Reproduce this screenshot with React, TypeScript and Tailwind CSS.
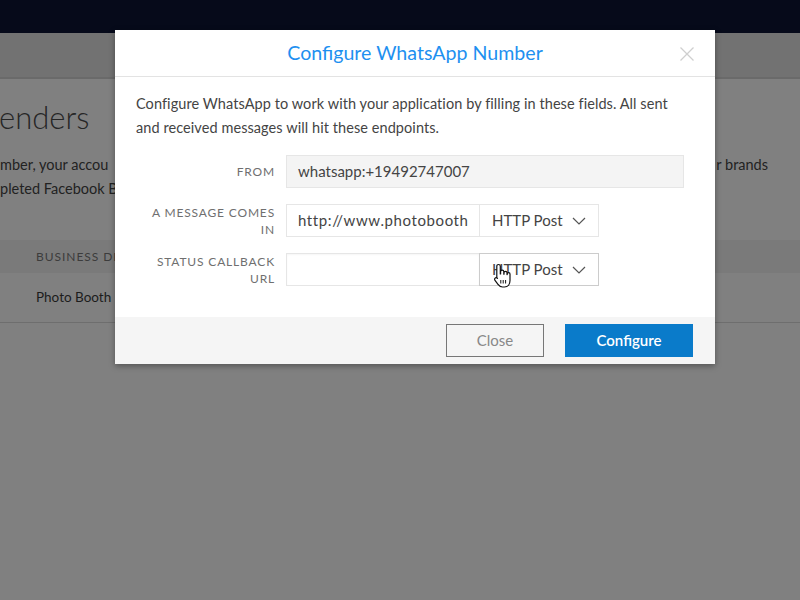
import React from "react";

function Chevron() {
  return (
    <svg width="14" height="8" viewBox="0 0 14 8" className="shrink-0">
      <path d="M1 1 L7 7 L13 1" fill="none" stroke="#555" strokeWidth="1.2" />
    </svg>
  );
}

function HandCursor() {
  return (
    <svg width="20" height="26" viewBox="0 0 20 26" className="absolute left-[13px] top-[9px] pointer-events-none">
      <path
        d="M5.5 1.5 C6.6 1.5 7.3 2.2 7.3 3.3 L7.3 11 L7.6 11 L7.6 8.8 C7.6 7.8 8.3 7.2 9.2 7.2 C10.1 7.2 10.8 7.8 10.8 8.8 L10.8 11.2 L11 11.2 L11 9.8 C11 8.9 11.7 8.3 12.5 8.3 C13.3 8.3 14 8.9 14 9.8 L14 11.6 L14.2 11.6 L14.2 11 C14.2 10.2 14.9 9.6 15.6 9.6 C16.4 9.6 17 10.2 17 11 L17 17.5 C17 21 15 24 11.5 24 L9.5 24 C7.5 24 6.2 23 5 21.4 L2 17.3 C1.4 16.5 1.5 15.5 2.2 15 C2.9 14.4 3.9 14.6 4.5 15.3 L3.8 14.6 L3.8 3.3 C3.8 2.2 4.5 1.5 5.5 1.5 Z"
        fill="#fff"
        stroke="#111"
        strokeWidth="1.2"
        strokeLinejoin="round"
      />
      <path d="M10.2 17 L10.2 20.5 M12.6 17 L12.6 20.5 M7.8 17 L7.8 20.5" stroke="#111" strokeWidth="1" />
    </svg>
  );
}

export default function App() {
  const font = { fontFamily: "Lato, 'Open Sans', 'Liberation Sans', sans-serif" };
  return (
    <div className="relative w-[800px] h-[600px] overflow-hidden bg-[#808080]" style={font}>
      {/* background page (dimmed) */}
      <div className="h-[33px] bg-[#060a1a]" />
      <div className="h-[46px] bg-[#727272] border-b-2 border-[#6a6a6a]" />
      <div className="pt-[20px]">
        <div className="whitespace-nowrap text-[31px] leading-[36px] font-light text-[#262626] -ml-[1px]">enders</div>
        <div className="mt-[18px] flex justify-between text-[14.5px] leading-[24px] text-[#222]">
          <span className="whitespace-nowrap">mber, your accou</span>
          <span className="pr-[32px]">r brands</span>
        </div>
        <div className="flex text-[14.5px] leading-[24px] text-[#222]">
          <span className="whitespace-nowrap">pleted Facebook B</span>
        </div>
        <div className="mt-[39px] h-[33px] bg-[#7a7a7a] flex items-center pl-[36px] text-[12px] tracking-[0.08em] text-[#3c3c3c]">
          <span className="whitespace-nowrap">BUSINESS DI</span>
        </div>
        <div className="h-[50px] border-b border-[#6e6e6e] flex items-center pl-[36px] text-[13.5px] text-[#1c1c1c]">
          <span className="whitespace-nowrap">Photo Booth</span>
        </div>
      </div>

      {/* modal */}
      <div className="absolute left-[115px] top-[30px] w-[600px] bg-white shadow-[0_2px_6px_rgba(0,0,0,0.35)]">
        <div className="relative h-[47px] border-b border-[#e3e3e3] flex items-center justify-center">
          <span className="text-[19.6px] text-[#1e90f0]">Configure WhatsApp Number</span>
          <svg width="16" height="16" viewBox="0 0 16 16" className="absolute left-[564px] top-[16px]">
            <path d="M1.5 1.5 L14.5 14.5 M14.5 1.5 L1.5 14.5" stroke="#cfcfcf" strokeWidth="1.3" />
          </svg>
        </div>
        <div className="px-[21px] pt-[15px] pb-[31px]">
          <p className="text-[14.5px] leading-[24px] text-[#444] tracking-[0.005em]">
            Configure WhatsApp to work with your application by filling in these fields. All sent and received messages will hit these endpoints.
          </p>
          <div className="mt-[15px] flex flex-col gap-[16px]">
            <div className="flex items-center gap-[11px] h-[33px]">
              <div className="w-[139px] text-right text-[12px] leading-[17px] tracking-[0.07em] text-[#6f6f6f]">FROM</div>
              <div className="w-[398px] h-[33px] bg-[#f4f4f4] border border-[#e6e6e6] flex items-center px-[11px] text-[15px] text-[#444]">
                whatsapp:+19492747007
              </div>
            </div>
            <div className="flex items-center gap-[11px] h-[33px]">
              <div className="w-[139px] text-right text-[12px] leading-[17px] tracking-[0.07em] text-[#6f6f6f]">
                A MESSAGE COMES<br />IN
              </div>
              <div className="flex h-[33px]">
                <div className="w-[194px] border border-[#e6e6e6] flex items-center px-[11px] text-[15px] tracking-[0.6px] text-[#444] overflow-hidden whitespace-nowrap">
                  http://www.photobooth
                </div>
                <div className="w-[120px] -ml-px border border-[#e6e6e6] flex items-center justify-between pl-[12px] pr-[12px] text-[15px] text-[#444]">
                  <span>HTTP Post</span>
                  <Chevron />
                </div>
              </div>
            </div>
            <div className="flex items-center gap-[11px] h-[33px]">
              <div className="w-[139px] text-right text-[12px] leading-[17px] tracking-[0.07em] text-[#6f6f6f]">
                STATUS CALLBACK<br />URL
              </div>
              <div className="flex h-[33px]">
                <div className="w-[194px] border border-[#e6e6e6] shadow-[inset_0_1px_2px_rgba(0,0,0,0.04)]" />
                <div className="relative w-[120px] -ml-px border border-[#cccccc] flex items-center justify-between pl-[12px] pr-[12px] text-[15px] text-[#444]">
                  <span>HTTP Post</span>
                  <Chevron />
                  <HandCursor />
                </div>
              </div>
            </div>
          </div>
        </div>
        <div className="h-[47px] bg-[#f5f5f5] flex items-center justify-end gap-[21px] pr-[22px]">
          <button className="w-[98px] h-[33px] border border-[#777] bg-[#f5f5f5] text-[15px] text-[#888]">Close</button>
          <button className="w-[128px] h-[33px] bg-[#0a7bca] text-[15px] font-semibold text-white">Configure</button>
        </div>
      </div>
    </div>
  );
}
